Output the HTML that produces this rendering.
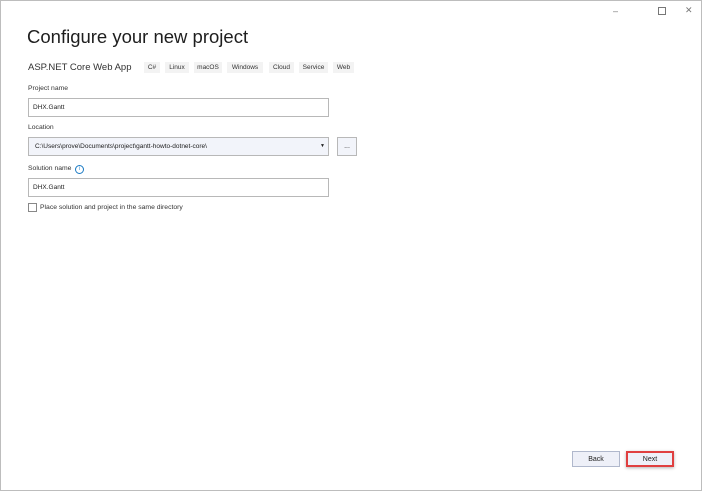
<!DOCTYPE html><html><head><style>
body{margin:0;width:702px;height:491px;overflow:hidden;font-family:"Liberation Sans",sans-serif;}
.win{position:absolute;left:0;top:0;width:700px;height:489px;border:1px solid #bdbdbd;background:#fff;}
.a{position:absolute;white-space:nowrap;color:#1e1e1e}
.tag{position:absolute;top:61px;height:11px;background:#f3f3f3;font-size:6.5px;line-height:11px;text-align:center;color:#333}
.lbl{position:absolute;font-size:6.8px;color:#333}
.inp{position:absolute;left:27px;font-size:6.5px;line-height:17px;padding-left:4px;box-sizing:border-box;width:301px;height:19px;border:1px solid #b8b8b8;background:#fff;color:#222}
.btn{position:absolute;top:450px;height:16px;width:48px;border:1px solid #b0b8cc;background:#eef0f8;font-size:7px;line-height:14px;text-align:center;color:#222;box-sizing:border-box}
</style></head><body><div class="win">
<div class="a" style="left:612px;top:5px;font-size:9px;color:#777">&#8211;</div>
<div class="a" style="left:657px;top:6px;width:6px;height:6px;border:1px solid #777"></div>
<div class="a" style="left:684px;top:4px;font-size:9px;color:#777">✕</div>
<div class="a" style="left:26px;top:25px;font-size:18.5px;color:#1e1e1e">Configure your new project</div>
<div class="a" style="left:27px;top:61px;font-size:9.5px;color:#333">ASP.NET Core Web App</div>
<div class="tag" style="left:143px;width:16px">C#</div>
<div class="tag" style="left:164px;width:24px">Linux</div>
<div class="tag" style="left:193px;width:28px">macOS</div>
<div class="tag" style="left:226px;width:36px">Windows</div>
<div class="tag" style="left:268px;width:25px">Cloud</div>
<div class="tag" style="left:298px;width:29px">Service</div>
<div class="tag" style="left:332px;width:21px">Web</div>
<div class="lbl" style="left:27px;top:84px">Project name</div>
<div class="inp" style="top:97px">DHX.Gantt</div>
<div class="lbl" style="left:27px;top:123px">Location</div>
<div class="inp" style="top:136px;background:#f2f4fa;padding-left:6px">C:\Users\prove\Documents\project\gantt-howto-dotnet-core\<span style="position:absolute;right:3px;font-size:5px">▼</span></div>
<div class="a" style="left:336px;top:136px;width:20px;height:19px;border:1px solid #b8b8b8;background:#f2f4fa;box-sizing:border-box;font-size:7px;text-align:center;line-height:17px">...</div>
<div class="lbl" style="left:27px;top:164px">Solution name</div>
<div class="a" style="left:74px;top:164px;width:7px;height:7px;border:1px solid #1a7ac4;border-radius:50%;font-size:5px;line-height:7px;text-align:center;color:#1a7ac4">i</div>
<div class="inp" style="top:177px">DHX.Gantt</div>
<div class="a" style="left:27px;top:202px;width:9px;height:9px;border:1px solid #888;box-sizing:border-box"></div>
<div class="a" style="left:39px;top:203px;font-size:6.8px;color:#333">Place solution and project in the same directory</div>
<div class="btn" style="left:571px;line-height:15px">Back</div>
<div class="btn" style="left:625px;line-height:13px;border:2px solid #e04040;box-shadow:0 1px 3px rgba(0,0,0,.3)">Next</div>
</div></body></html>
